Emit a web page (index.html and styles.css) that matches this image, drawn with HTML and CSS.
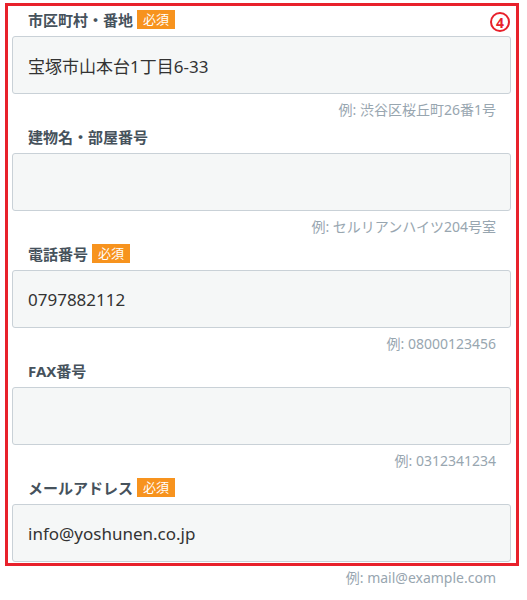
FILE: index.html
```html
<!DOCTYPE html>
<html lang="ja">
<head>
  <meta charset="UTF-8">
  <meta name="viewport" content="width=device-width, initial-scale=1.0">
  <title>お客様情報</title>
  <link rel="stylesheet" href="styles.css">
</head>
<body>
  <!-- 注記の枠 -->
  <div class="note-frame">
    <span class="note-num">4</span>
  </div>

  <form class="form">
    <div class="field">
      <label class="field-label">市区町村・番地<span class="badge">必須</span></label>
      <input class="field-input" type="text" value="宝塚市山本台1丁目6-33">
      <p class="field-hint">例: 渋谷区桜丘町26番1号</p>
    </div>

    <div class="field">
      <label class="field-label">建物名・部屋番号</label>
      <input class="field-input" type="text" value="">
      <p class="field-hint">例: セルリアンハイツ204号室</p>
    </div>

    <div class="field">
      <label class="field-label">電話番号<span class="badge">必須</span></label>
      <input class="field-input" type="text" value="0797882112">
      <p class="field-hint">例: 08000123456</p>
    </div>

    <div class="field">
      <label class="field-label">FAX番号</label>
      <input class="field-input" type="text" value="">
      <p class="field-hint">例: 0312341234</p>
    </div>

    <div class="field">
      <label class="field-label">メールアドレス<span class="badge">必須</span></label>
      <input class="field-input" type="text" value="info@yoshunen.co.jp">
      <p class="field-hint">例: mail@example.com</p>
    </div>
  </form>
</body>
</html>
```

FILE: styles.css
```css
/* RESET */
* {
  margin: 0;
  padding: 0;
  box-sizing: border-box;
}

body {
  font-family: "Noto Sans", "Noto Sans CJK JP", sans-serif;
  background-color: #ffffff;
  color: #333333;
  position: relative;
}

/* FORMULARIO */
.form {
  padding: 7px 16px 0 12px;
}

.field {
  display: flex;
  flex-direction: column;
  padding-bottom: 4px;
}

.field-label {
  display: flex;
  align-items: center;
  height: 24px;
  padding-left: 16px;
  margin-bottom: 5px;
  font-size: 15px;
  font-weight: bold;
  color: #46525c;
}

.badge {
  display: inline-block;
  margin-left: 4px;
  padding: 0 6px;
  height: 19px;
  line-height: 19px;
  background-color: #f7931e;
  color: #ffffff;
  font-size: 13px;
  font-weight: normal;
}

.field-input {
  display: block;
  width: 100%;
  height: 58px;
  padding: 0 15px;
  border: 1px solid #c9d1d7;
  border-radius: 3px;
  background-color: #f5f7f7;
  font-family: inherit;
  font-size: 17px;
  color: #333333;
  outline: none;
}

.field-hint {
  margin-top: 6px;
  height: 20px;
  line-height: 20px;
  padding-right: 15px;
  text-align: right;
  font-size: 14px;
  color: #98a6b0;
}

/* MARCO DE ANOTACIÓN */
.note-frame {
  position: absolute;
  left: 5px;
  top: 3px;
  width: 514px;
  height: 563px;
  border: 3px solid #e8212b;
  pointer-events: none;
  z-index: 10;
}

.note-num {
  position: absolute;
  top: 6px;
  right: 6px;
  width: 20px;
  height: 20px;
  border: 2px solid #e8212b;
  border-radius: 50%;
  display: flex;
  align-items: center;
  justify-content: center;
  font-size: 14px;
  font-weight: bold;
  color: #e8212b;
  background-color: #ffffff;
}
```
